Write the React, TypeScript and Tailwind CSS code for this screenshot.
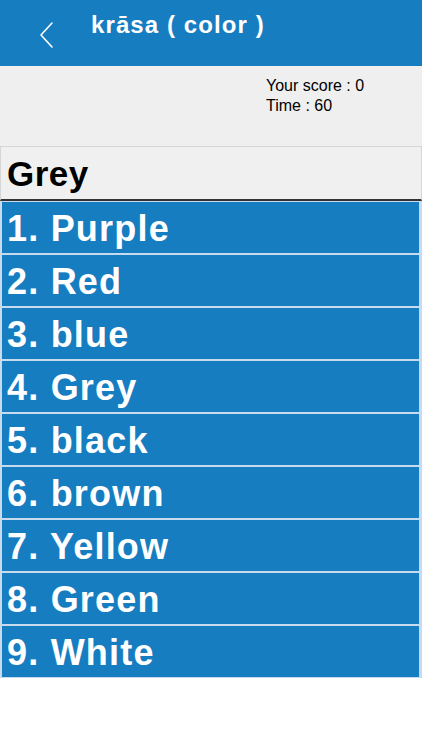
import React from "react";

const items = ["Purple", "Red", "blue", "Grey", "black", "brown", "Yellow", "Green", "White"];

export default function App() {
  return (
    <div className="w-[422px] h-[750px] bg-white flex flex-col" style={{ fontFamily: '"Liberation Sans", Arial, sans-serif' }}>
      <div className="h-[66px] bg-[#177dc1] flex items-start shrink-0">
        <div className="w-[91px] h-full flex items-start pt-[21px] pl-[38px]">
          <svg width="18" height="28" viewBox="0 0 18 28" fill="none">
            <path d="M14 2 L3 14 L14 26" stroke="white" strokeWidth="1.6" strokeLinecap="round" strokeLinejoin="round" />
          </svg>
        </div>
        <div className="pt-[11px] text-white font-bold text-[24px] leading-[28px] tracking-[1.1px]">krāsa ( color )</div>
      </div>
      <div className="h-[80px] bg-[#efefef] shrink-0 flex flex-col pl-[266px] pt-[10px] box-border">
        <div className="text-[16px] leading-[20px] text-black">Your score : 0</div>
        <div className="text-[16px] leading-[20px] text-black">Time : 60</div>
      </div>
      <div className="h-[55px] bg-[#f0f0f0] border-t border-l border-r border-[#d6d6d6] border-b-2 border-b-[#333333] shrink-0 flex items-end pl-[6px] pb-[5px] box-border">
        <span className="text-black font-bold text-[35px] leading-[40px] tracking-[0.5px]">Grey</span>
      </div>
      <div className="flex flex-col bg-[#c6dcee] pl-[2px] pr-[3px] pt-[1px] shrink-0">
        {items.map((c, i) => (
          <div key={c} className={`h-[51px] bg-[#177dc1] flex items-center pl-[5px] ${i < items.length - 1 ? "mb-[2px]" : "mb-[1px]"}`}>
            <span className="text-white font-bold text-[36px] leading-[40px] tracking-[1.2px] pt-[2px]">{i + 1}. {c}</span>
          </div>
        ))}
      </div>
      <div className="flex-1 bg-white" />
    </div>
  );
}
